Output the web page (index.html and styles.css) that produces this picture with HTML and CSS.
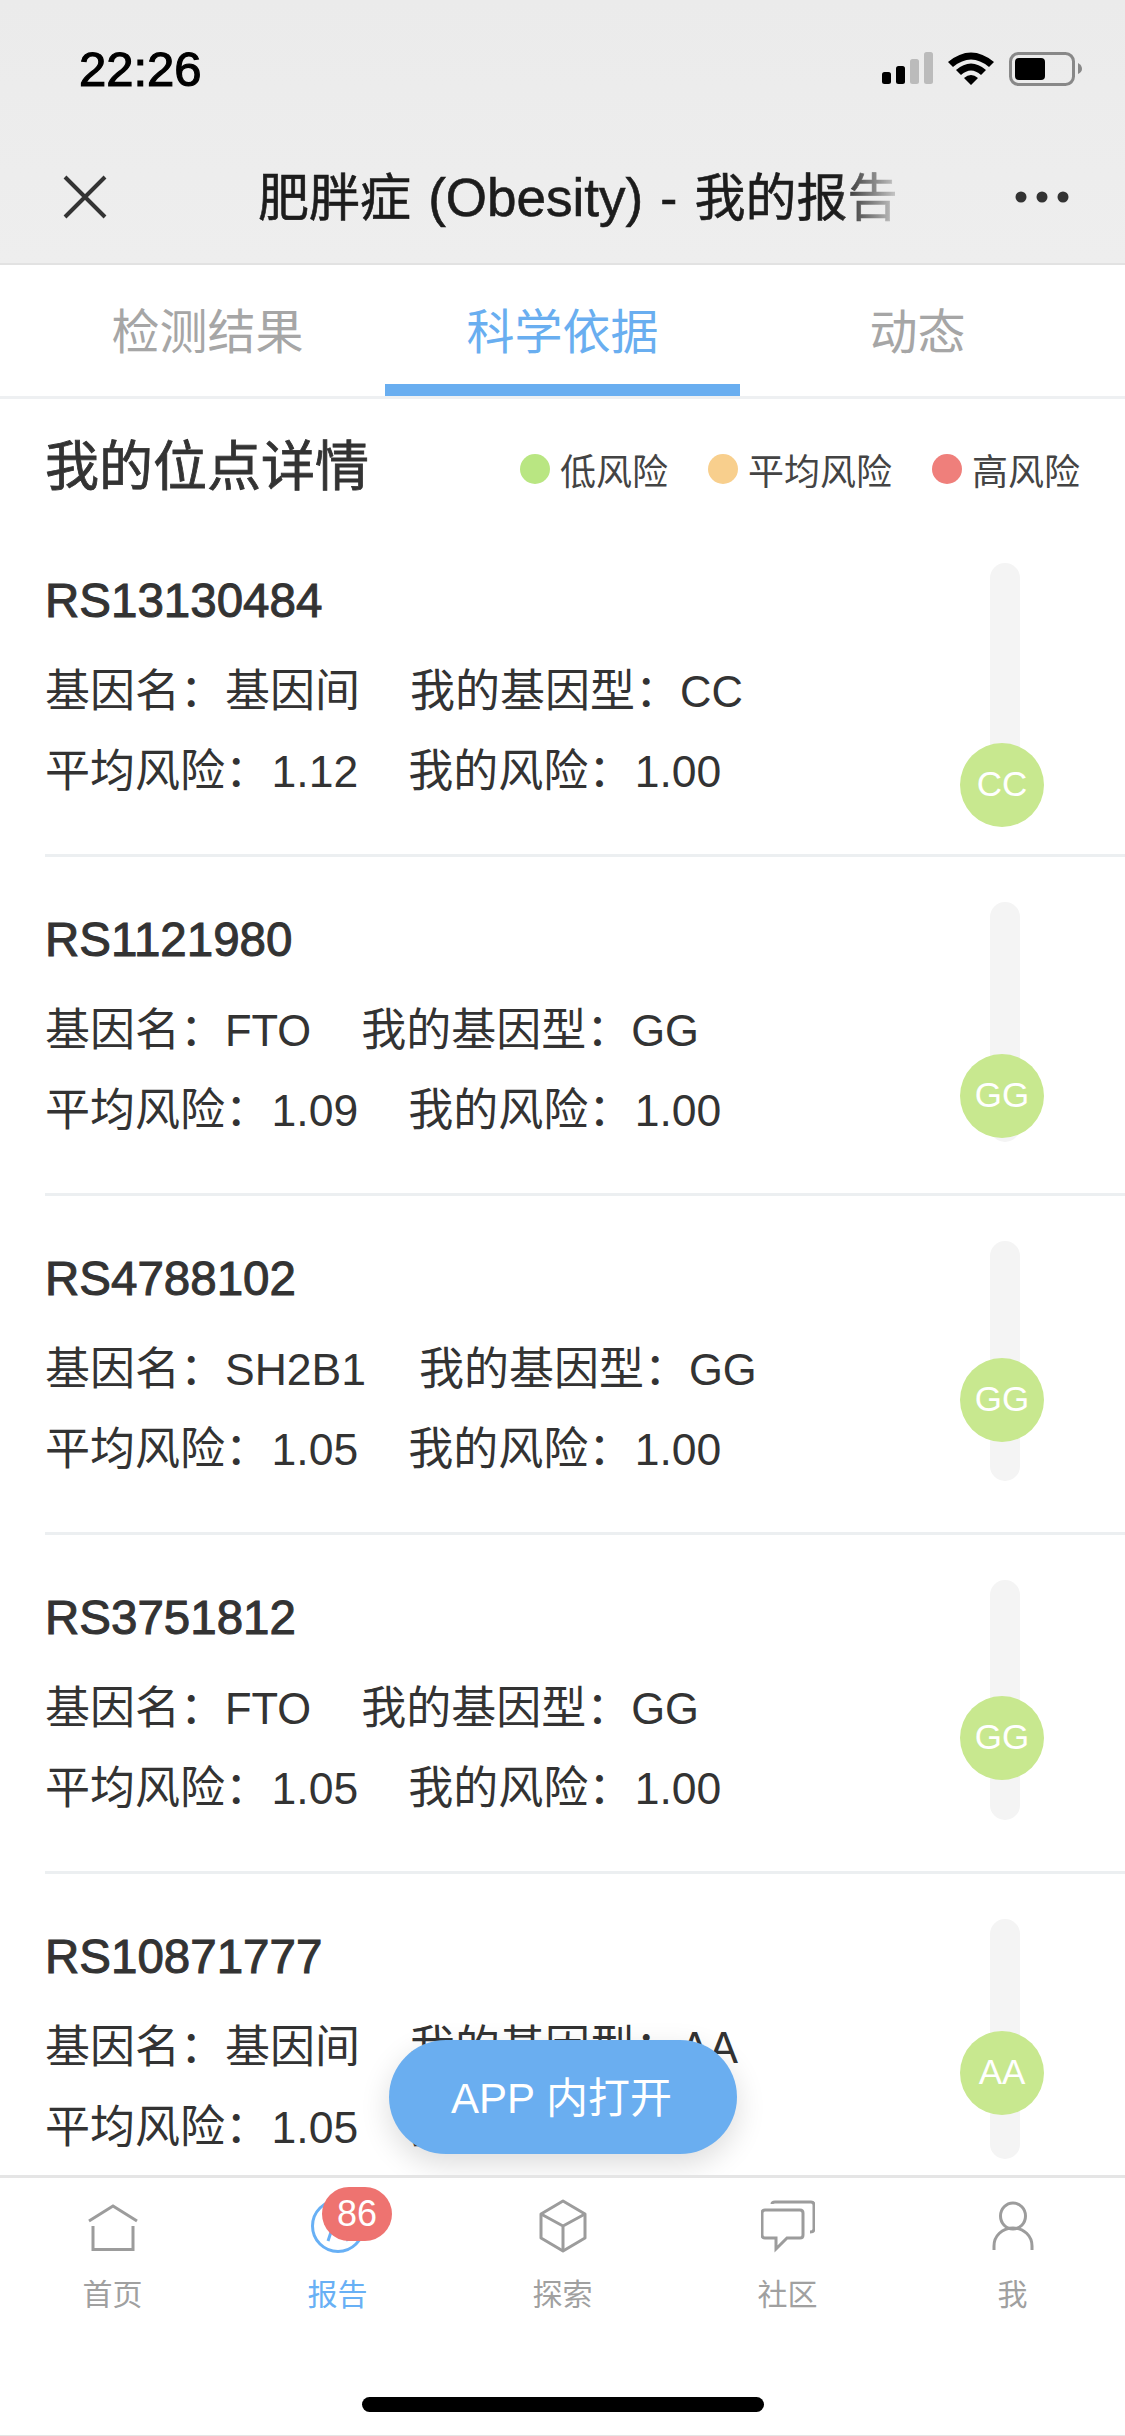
FILE: index.html
```html
<!DOCTYPE html>
<html lang="zh-CN">
<head>
<meta charset="utf-8">
<title>肥胖症 (Obesity) - 我的报告</title>
<link rel="stylesheet" href="styles.css">
</head>
<body>
<div class="phone">
  <header class="chrome">
    <div class="status">
      <span class="time">22:26</span>
      <svg class="status-icons" width="200" height="34" viewBox="0 0 200 34">
        <rect x="0" y="20" width="9" height="12" rx="2.5" fill="#000"/>
        <rect x="14" y="14" width="9" height="18" rx="2.5" fill="#000"/>
        <rect x="28" y="7" width="9" height="25" rx="2.5" fill="#bbb"/>
        <rect x="42" y="0" width="9" height="32" rx="2.5" fill="#bbb"/>
        <path d="M66 10 Q89 -9 112 10 L107 15 Q89 0 71 15Z M74 18 Q89 5 104 18 L99 23 Q89 14 79 23Z M82 26 Q89 20 96 26 L89 33Z" fill="#000"/>
        <rect x="128.500" y="1.500" width="63" height="31" rx="8" fill="none" stroke="#888" stroke-width="3"/>
        <rect x="133" y="6" width="30" height="22" rx="4" fill="#000"/>
        <path d="M196 11 Q200 13 200 17 Q200 20 196 22Z" fill="#888"/>
      </svg>
    </div>
    <div class="navbar">
      <svg class="nav-close" width="44" height="44" viewBox="0 0 44 44"><path d="M2 2 L42 42 M42 2 L2 42" stroke="#333" stroke-width="4" fill="none"/></svg>
      <h1 class="nav-title">肥胖症 <span class="nav-latin">(Obesity)</span> - 我的报告</h1>
      <svg class="nav-more" width="54" height="12" viewBox="0 0 54 12"><circle cx="6" cy="6" r="5.500" fill="#333"/><circle cx="27" cy="6" r="5.500" fill="#333"/><circle cx="48" cy="6" r="5.500" fill="#333"/></svg>
    </div>
  </header>

  <nav class="tabs">
    <a class="tab">检测结果</a>
    <a class="tab tab-active">科学依据</a>
    <a class="tab">动态</a>
  </nav>

  <main class="content">
    <div class="section-head">
      <h2 class="section-title">我的位点详情</h2>
      <ul class="legend">
        <li class="legend-item"><i class="dot dot-low"></i>低风险</li>
        <li class="legend-item"><i class="dot dot-mid"></i>平均风险</li>
        <li class="legend-item"><i class="dot dot-high"></i>高风险</li>
      </ul>
    </div>

    <article class="row">
      <div class="row-body">
        <h3 class="rs">RS13130484</h3>
        <p class="line"><span>基因名：基因间</span><span class="second">我的基因型：<span class="val">CC</span></span></p>
        <p class="line"><span>平均风险：<span class="num">1.12</span></span><span class="second">我的风险：<span class="num">1.00</span></span></p>
      </div>
      <div class="track"><span class="bubble" style="top:180px">CC</span></div>
    </article>
    <article class="row">
      <div class="row-body">
        <h3 class="rs">RS1121980</h3>
        <p class="line"><span>基因名：<span class="val">FTO</span></span><span class="second">我的基因型：<span class="val">GG</span></span></p>
        <p class="line"><span>平均风险：<span class="num">1.09</span></span><span class="second">我的风险：<span class="num">1.00</span></span></p>
      </div>
      <div class="track"><span class="bubble" style="top:152px">GG</span></div>
    </article>
    <article class="row">
      <div class="row-body">
        <h3 class="rs">RS4788102</h3>
        <p class="line"><span>基因名：<span class="val-wide">SH2B1</span></span><span class="second">我的基因型：<span class="val">GG</span></span></p>
        <p class="line"><span>平均风险：<span class="num">1.05</span></span><span class="second">我的风险：<span class="num">1.00</span></span></p>
      </div>
      <div class="track"><span class="bubble" style="top:117px">GG</span></div>
    </article>
    <article class="row">
      <div class="row-body">
        <h3 class="rs">RS3751812</h3>
        <p class="line"><span>基因名：<span class="val">FTO</span></span><span class="second">我的基因型：<span class="val">GG</span></span></p>
        <p class="line"><span>平均风险：<span class="num">1.05</span></span><span class="second">我的风险：<span class="num">1.00</span></span></p>
      </div>
      <div class="track"><span class="bubble" style="top:116px">GG</span></div>
    </article>
    <article class="row">
      <div class="row-body">
        <h3 class="rs">RS10871777</h3>
        <p class="line"><span>基因名：基因间</span><span class="second">我的基因型：<span class="val">AA</span></span></p>
        <p class="line"><span>平均风险：<span class="num">1.05</span></span><span class="second">我的风险：<span class="num">1.00</span></span></p>
      </div>
      <div class="track"><span class="bubble" style="top:112px">AA</span></div>
    </article>
    <button class="open-app">APP 内打开</button>
  </main>

  <footer class="tabbar">
    <div class="tabbar-items">
      <a class="tb">
        <svg class="tb-icon" width="54" height="54" viewBox="0 0 54 54" fill="none" stroke="#9c9c9c" stroke-width="3"><path d="M3 22 L27 7 L51 22"/><path d="M7 27 V50.500 H47 V27"/></svg>
        <span>首页</span>
      </a>
      <a class="tb tb-active">
        <svg class="tb-icon" width="54" height="54" viewBox="0 0 54 54" fill="none" stroke="#68b0f5" stroke-width="3"><circle cx="27" cy="27" r="25.500"/><path d="M17 42 L21 30 H33 L37 42"/></svg>
        <span>报告</span>
        <b class="badge">86</b>
      </a>
      <a class="tb">
        <svg class="tb-icon" width="54" height="54" viewBox="0 0 54 54" fill="none" stroke="#9c9c9c" stroke-width="3" stroke-linejoin="round"><path d="M27 2 L49 15 V39 L27 52 L5 39 V15Z"/><path d="M5 15 L27 27 L49 15 M27 27 V52"/></svg>
        <span>探索</span>
      </a>
      <a class="tb">
        <svg class="tb-icon" width="54" height="54" viewBox="0 0 54 54" fill="none" stroke="#9c9c9c" stroke-width="3"><path d="M11 5 Q11 3 14 3 H50 Q53 3 53 6 V30 Q53 33 49 33"/><path d="M4 11 H39 Q42 11 42 14 V36 Q42 39 39 39 H26 L15 50 V39 H4 Q1 39 1 36 V14 Q1 11 4 11Z"/></svg>
        <span>社区</span>
      </a>
      <a class="tb">
        <svg class="tb-icon" width="54" height="54" viewBox="0 0 54 54" fill="none" stroke="#9c9c9c" stroke-width="3"><ellipse cx="27" cy="17" rx="12.500" ry="13"/><path d="M8 51 V47 C8 37 16 29 27 29 C38 29 46 37 46 47 V51"/></svg>
        <span>我</span>
      </a>
    </div>
    <div class="home-indicator"></div>
  </footer>
</div>
</body>
</html>
```
FILE: styles.css
```css
* { box-sizing: border-box; }
html, body { margin: 0; padding: 0; background: #fff; }
body { font-family: "Liberation Sans", "Noto Sans CJK SC", sans-serif; color: #333; }
.phone { width: 1125px; height: 2436px; display: flex; flex-direction: column; overflow: hidden; border-bottom: 1px solid #e4e4e4; }

.chrome { height: 265px; background: linear-gradient(180deg, #ebebeb, #eeeeee); border-bottom: 2px solid #e2e2e2; flex: none; }
.status { height: 164px; display: flex; justify-content: space-between; padding: 52px 43px 0 79px; }
.time { font-size: 49px; line-height: 34px; font-weight: 400; color: #000; -webkit-text-stroke: 1.2px #000; }
.status-icons { display: block; }
.navbar { display: flex; align-items: center; height: 66px; padding: 0 58px 0 63px; }
.nav-close { flex: none; }
.nav-title { margin: 2px 0 0 151px; width: 637px; flex: none; white-space: nowrap; overflow: hidden; font-size: 51px; line-height: 66px; font-weight: 400; word-spacing: 3px; color: #1c1c1c; -webkit-text-stroke: 0.6px #1c1c1c; -webkit-mask-image: linear-gradient(90deg, #000 91%, rgba(0,0,0,.2) 100%); mask-image: linear-gradient(90deg, #000 91%, rgba(0,0,0,.2) 100%); }
.nav-latin { font-size: 53px; }
.nav-more { flex: none; margin-left: 120px; }

.tabs { flex: none; height: 134px; display: flex; padding: 0 30px; border-bottom: 3px solid #eef0f2; }
.tab { width: 355px; height: 131px; padding-top: 38px; text-align: center; font-size: 48px; line-height: 60px; color: #a6a6a6; }
.tab-active { color: #69aef0; border-bottom: 12px solid #69aef0; }

.content { flex: 1; min-height: 0; overflow: hidden; position: relative; }
.section-head { height: 119px; padding: 37px 45px 0; display: flex; justify-content: space-between; }
.section-title { margin: 0; font-size: 54px; line-height: 62px; font-weight: 400; color: #333; -webkit-text-stroke: 0.8px #333; }
.legend { margin: 0; padding: 6px 0 0; list-style: none; display: flex; gap: 40px; }
.legend-item { display: flex; align-items: center; gap: 10px; height: 54px; font-size: 36px; color: #444; }
.dot { width: 30px; height: 30px; border-radius: 50%; }
.dot-low { background: #b9e682; }
.dot-mid { background: #f8cf8d; }
.dot-high { background: #ef7f7b; }

.row { height: 339px; margin-left: 45px; padding-top: 55px; display: flex; justify-content: space-between; border-bottom: 3px solid #eceff1; }
.row:last-of-type { border-bottom: 0; }
.rs { margin: 0 0 23px; font-size: 47.5px; line-height: 56px; font-weight: 400; color: #333; -webkit-text-stroke: 1px #333; }
.line { margin: 0; font-size: 45px; line-height: 79px; color: #333; white-space: nowrap; }
.val { font-size: 43.5px; }
.val-wide { font-size: 44.5px; margin-right: 3px; }
.num { font-size: 44.5px; margin-left: 1.5px; }
.second { margin-left: 50px; }
.track { width: 30px; height: 240px; margin-right: 105px; margin-top: -10px; border-radius: 15px; background: #f4f4f4; position: relative; }
.bubble { position: absolute; left: -30px; width: 84px; height: 84px; border-radius: 50%; background: #c8e88f; color: #fff; font-size: 35px; line-height: 82px; text-align: center; }

.open-app { position: absolute; left: 389px; top: 1641px; width: 348px; height: 114px; padding: 0 3px 5px 0; border: 0; border-radius: 57px; background: #6aaef0; color: #fff; font: 42px "Liberation Sans", "Noto Sans CJK SC", sans-serif; box-shadow: 0 10px 30px rgba(0,0,0,.14); }

.tabbar { flex: none; height: 260px; background: #fff; border-top: 3px solid #e5e5e5; position: relative; }
.tabbar-items { display: flex; padding-top: 21px; }
.tb { width: 225px; display: flex; flex-direction: column; align-items: center; gap: 25px; font-size: 30px; line-height: 34px; color: #a0a0a0; position: relative; }
.tb-icon { display: block; }
.tb-active { color: #68b0f5; }
.badge { position: absolute; left: 97px; top: -12px; width: 70px; height: 54px; border-radius: 27px; background: #ee7370; color: #fff; font-size: 36px; font-weight: 400; line-height: 54px; text-align: center; }
.home-indicator { position: absolute; left: 362px; bottom: 23px; width: 402px; height: 15px; border-radius: 8px; background: #000; }
```
